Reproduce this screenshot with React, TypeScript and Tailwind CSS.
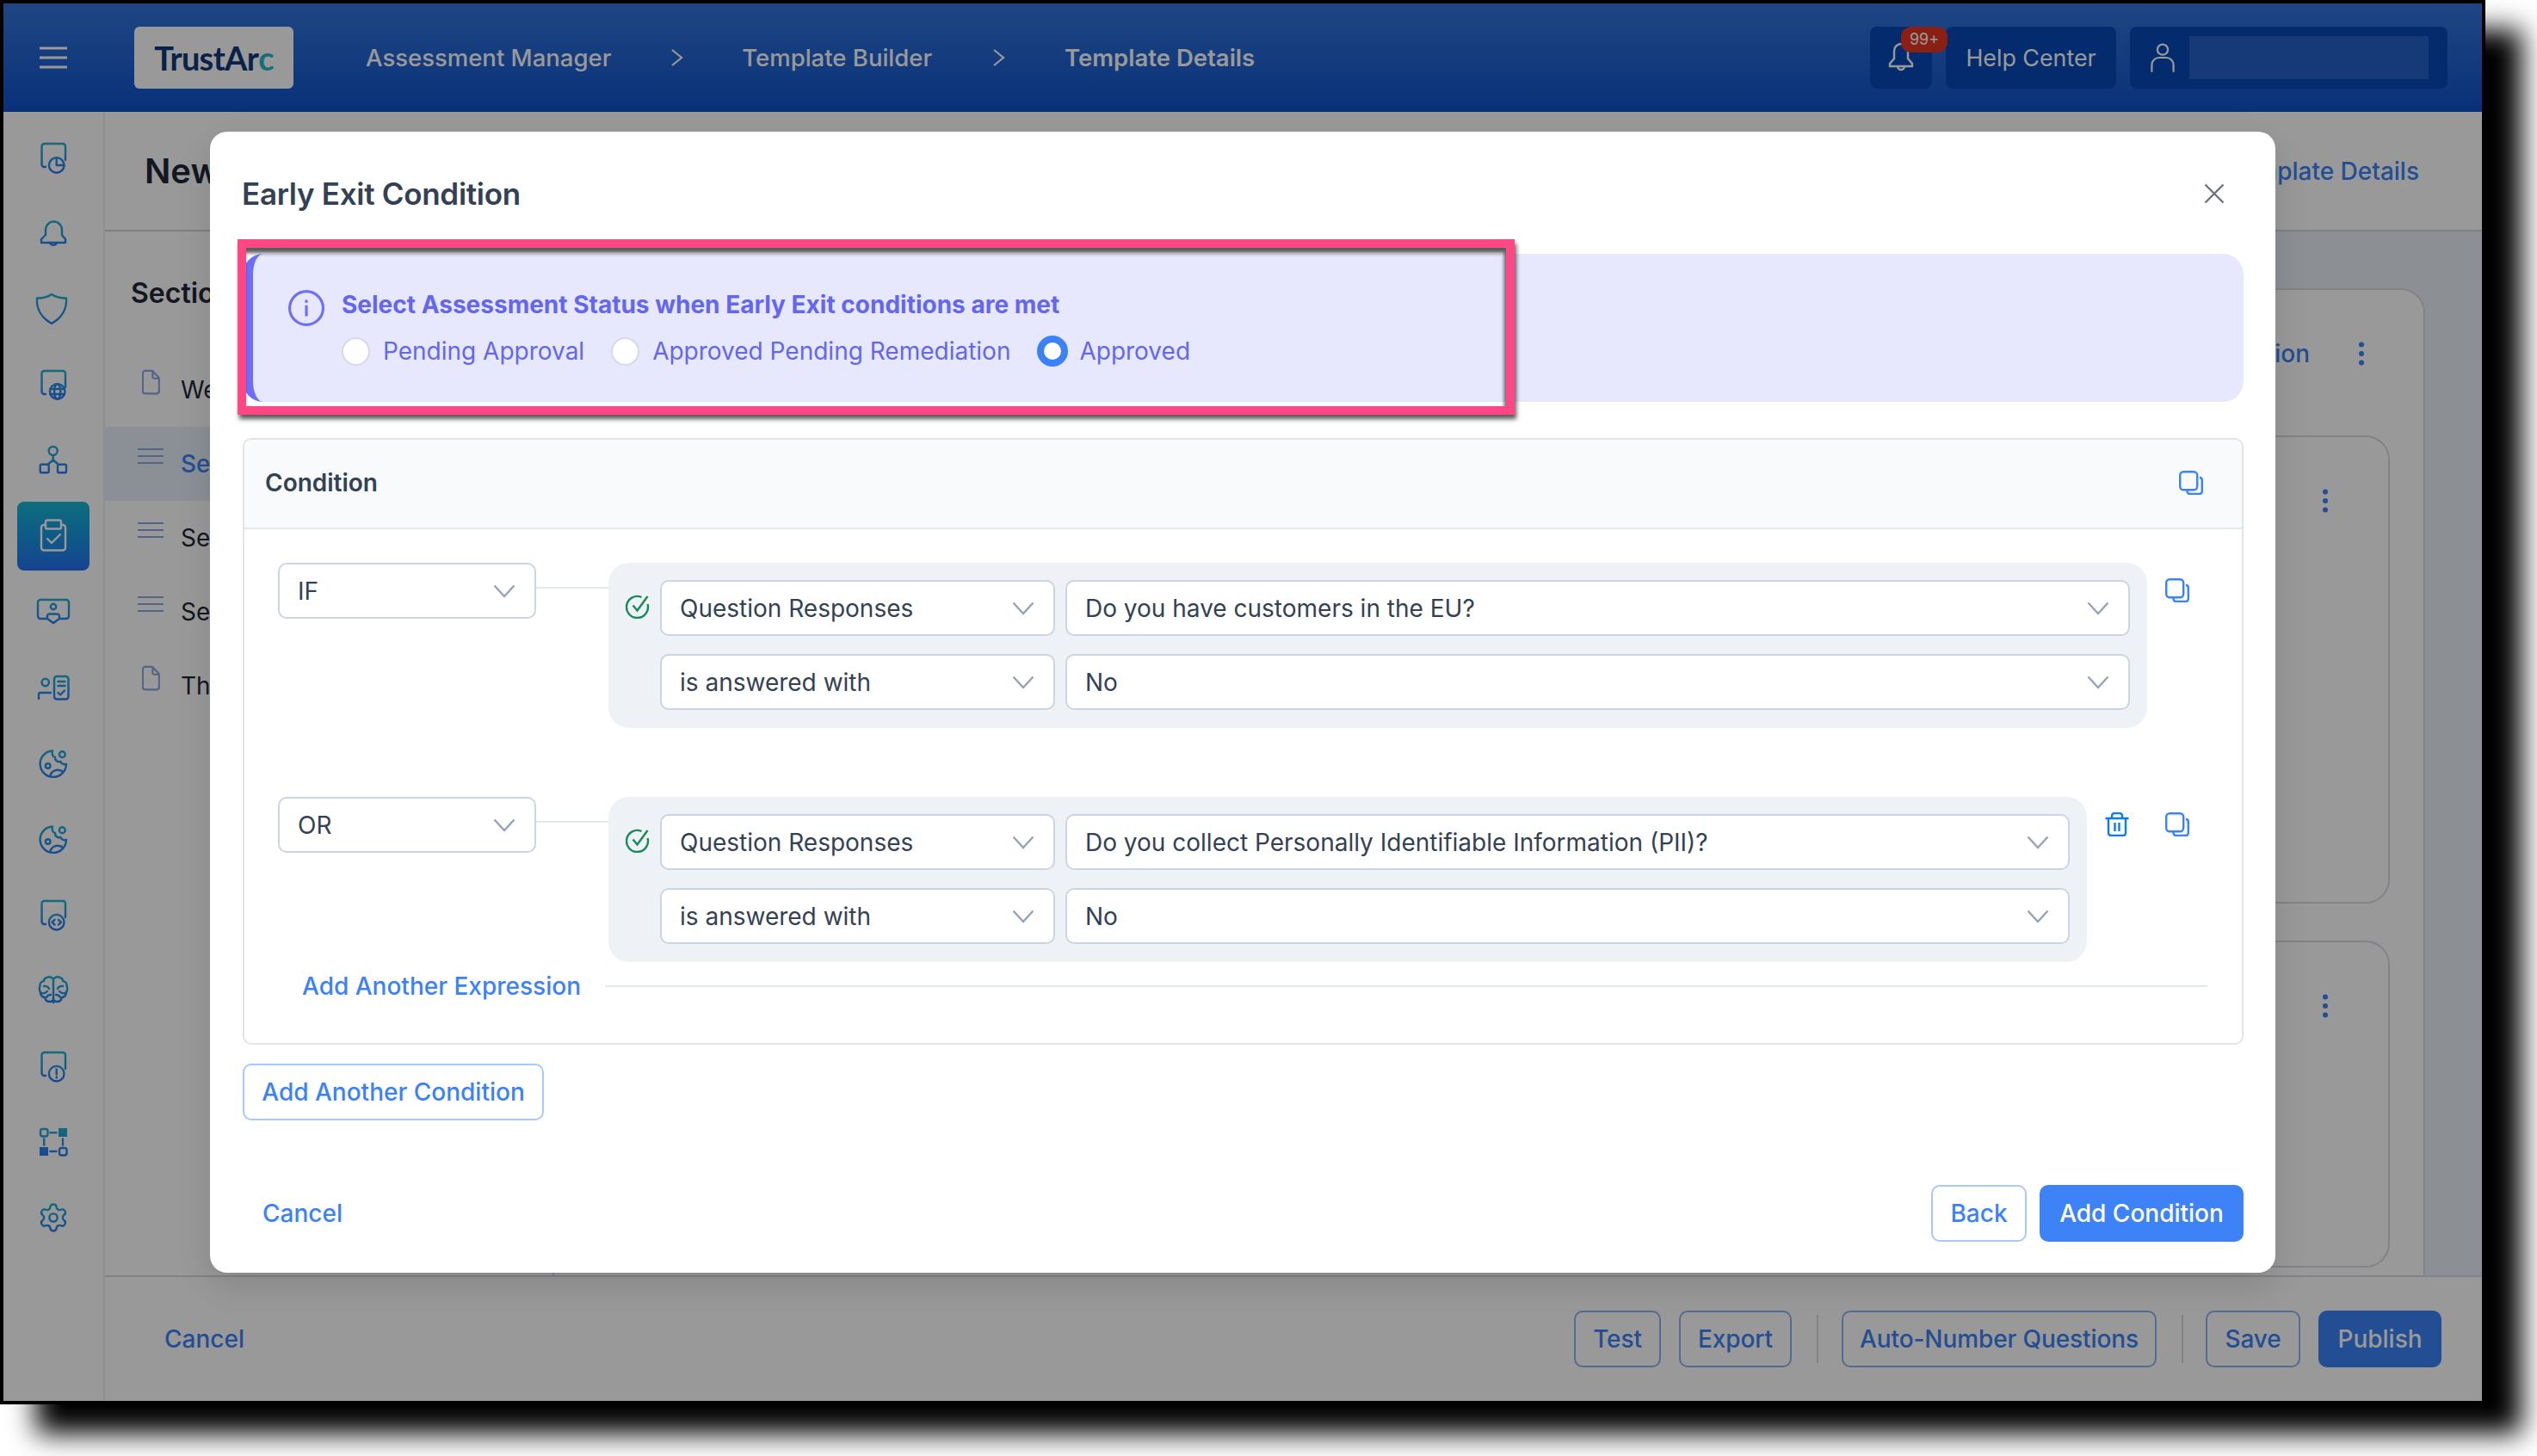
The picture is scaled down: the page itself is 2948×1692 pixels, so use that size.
import type { ReactNode } from "react";

const SIDE_ICONS: ReactNode[] = [
  <DocBase key="a">
    <circle cx="27.7" cy="33" r="8.8" />
    <path d="M27.7 33V24.2M27.7 33h8.8" />
  </DocBase>,
  <g key="b">
    <path d="M15 22v-6a9.5 9.5 0 0 1 19 0v6l4 5v4H10v-4z" transform="translate(0 4)" />
    <path d="M20 35a4.2 4.2 0 0 0 8 0" />
  </g>,
  <path key="c" d="M22 7c4 3 10 4.5 17 4.5 1 14-7 24-17 29.5-10-5.5-18-15.5-17-29.5 7 0 13-1.500 17-4.500z" />,
  <DocBase key="d">
    <circle cx="28.700" cy="32" r="8.800" />
    <ellipse cx="28.700" cy="32" rx="3.600" ry="8.800" />
    <path d="M20.500 29h16.400M20.500 35h16.400" />
  </DocBase>,
  <g key="e">
    <circle cx="23.700" cy="13" r="5" />
    <rect x="8.700" y="28.700" width="10" height="9.500" rx="1.500" />
    <rect x="29" y="28.700" width="10" height="9.500" rx="1.500" />
    <path d="M23.700 18v5.500M23.700 23.500l-6 5.200M23.700 23.500l6 5.200" />
  </g>,
  <g key="f">
    <path d="M15 11h-2a3 3 0 0 0-3 3v23.500a3 3 0 0 0 3 3h22a3 3 0 0 0 3-3V14a3 3 0 0 0-3-3h-2" />
    <rect x="15" y="5.500" width="18" height="10" rx="2" />
    <path d="M17 27l5 5 10-10" />
  </g>,
  <g key="g">
    <path d="M16 32H9a3 3 0 0 1-3-3V13a3 3 0 0 1 3-3h30a3 3 0 0 1 3 3v16a3 3 0 0 1-3 3h-7" />
    <circle cx="24" cy="18" r="3.200" />
    <path d="M17 32v-3a2.500 2.500 0 0 1 2.500-2.500h9A2.500 2.500 0 0 1 31 29v3l-7 5z" />
  </g>,
  <g key="h">
    <rect x="25" y="11" width="16.500" height="26.500" rx="3" />
    <path d="M29.500 17h8M29.500 22h8M29.500 30l2.500 2.500 5-5" />
    <circle cx="14.700" cy="18" r="4.200" />
    <path d="M7 37v-5a2 2 0 0 1 2-2h12" />
  </g>,
  <Cookie key="i" />,
  <Cookie key="j" />,
  <DocBase key="k">
    <circle cx="27.700" cy="32.700" r="8.800" />
    <path d="M25.500 29.800l-3 2.900 3 2.900M30 29.800l3 2.900-3 2.900" />
  </DocBase>,
  <g key="l">
    <path d="M24 38V11" />
    <path d="M24 11c-1.500-2.500-5-3.500-7.500-2-2 .5-3.500 2-3.500 4-3 .5-5 3-4.500 6-1 1-1 5 .5 7-.5 3 2 6 5 6 .5 3 3 5 6 5 2 0 4-1 4-3" />
    <path d="M13 19c3-.5 5 1 6 3M10 27c3 1 5 0 7-2M16 32c1-2 3-3 5-3" />
    <g transform="matrix(-1 0 0 1 48 0)">
      <path d="M24 11c-1.500-2.500-5-3.500-7.500-2-2 .5-3.500 2-3.500 4-3 .5-5 3-4.500 6-1 1-1 5 .5 7-.5 3 2 6 5 6 .5 3 3 5 6 5 2 0 4-1 4-3" />
      <path d="M13 19c3-.5 5 1 6 3M10 27c3 1 5 0 7-2M16 32c1-2 3-3 5-3" />
    </g>
  </g>,
  <DocBase key="m">
    <circle cx="27.700" cy="32.700" r="8.800" />
    <path d="M27.700 27.500v6M27.700 36.500v1" />
  </DocBase>,
  <g key="n">
    <rect x="9" y="9" width="8.500" height="8.500" rx="2.500" />
    <rect x="31" y="31" width="8.500" height="8.500" rx="2.500" />
    <rect x="30" y="8" width="10" height="10" fill="url(#side-grad)" stroke="none" />
    <rect x="8" y="30" width="10" height="10" fill="url(#side-grad)" stroke="none" />
    <path d="M20.500 13.200h7M20.500 35h7M13.200 20.500v7M35 20.500v7" strokeDasharray="2.500 2" />
  </g>,
  <g key="o" transform="translate(5.400 5.400) scale(1.550)" strokeWidth="1.550">
    <path
      stroke="url(#gear-grad)"
      d="M9.671 4.136a2.34 2.34 0 0 1 4.659 0 2.34 2.34 0 0 0 3.319 1.915 2.34 2.34 0 0 1 2.33 4.033 2.34 2.34 0 0 0 0 3.831 2.34 2.34 0 0 1-2.33 4.033 2.34 2.34 0 0 0-3.319 1.915 2.34 2.34 0 0 1-4.659 0 2.34 2.34 0 0 0-3.32-1.915 2.34 2.34 0 0 1-2.33-4.033 2.34 2.34 0 0 0 0-3.831A2.34 2.34 0 0 1 6.350 6.051a2.34 2.34 0 0 0 3.319-1.915"
    />
    <circle stroke="url(#gear-grad)" cx="12" cy="12" r="3" />
  </g>,
];

function DocBase({ children }: { children: ReactNode }) {
  return (
    <g>
      <path d="M15 35h-1.500a3 3 0 0 1-3-3V11a3 3 0 0 1 3-3h21.500a3 3 0 0 1 3 3v16" />
      {children}
    </g>
  );
}

function Cookie() {
  return (
    <g>
      <path d="M23 9.500A15.200 15.200 0 1 0 39 25c-3 1-6-1-6.500-3-4 1-7-2-6.500-5-3-.5-4-4-3-7.500z" />
      <circle cx="34.300" cy="13.700" r="3.400" />
      <circle cx="17.700" cy="27" r="2.800" />
      <path d="M20 39c1-5 6-8 10.500-7 2 0 3.500 1 4.500 2" />
    </g>
  );
}

function Chevron() {
  return (
    <svg viewBox="0 0 26 16" className="h-[16px] w-[26px] shrink-0" fill="none" stroke="#94a3b8" strokeWidth="2.400">
      <path d="M1.500 1.500L13 14 24.500 1.500" />
    </svg>
  );
}

function CopyIcon() {
  return (
    <svg viewBox="0 0 28 28" className="h-[28px] w-[28px] shrink-0" fill="none" stroke="#3b82f6" strokeWidth="2.400">
      <rect x="1.200" y="1.200" width="20" height="21" rx="4" />
      <path d="M24 8a3 3 0 0 1 2.800 3v13a3 3 0 0 1-3 3H12.500a3 3 0 0 1-3-3v-1.800" />
    </svg>
  );
}

function TrashIcon() {
  return (
    <svg viewBox="0 0 28 28" className="h-[28px] w-[28px] shrink-0" fill="none" stroke="#0b7bf5" strokeWidth="2.400">
      <path d="M0.500 7H27.500M8 7V4a3 3 0 0 1 3-3h6a3 3 0 0 1 3 3v3M4 7v17a3 3 0 0 0 3 3h14a3 3 0 0 0 3-3V7M11.500 12v10M16.500 12v10" />
    </svg>
  );
}

function CheckIcon() {
  return (
    <svg viewBox="0 0 28 28" className="mt-[17px] h-[28px] w-[28px] shrink-0" fill="none" stroke="#188a55" strokeWidth="2.400">
      <path d="M25.500 11a12.500 12.500 0 1 1-7-8" />
      <path d="M8.500 12.500l5 6L25.500 2" />
    </svg>
  );
}

function FileIcon() {
  return (
    <svg viewBox="0 0 22 30" className="ml-[5px] mr-[4px] mt-[-18px] h-[30px] w-[21px] shrink-0" fill="none" stroke="#8ba7e0" strokeWidth="2.200">
      <path d="M3.500 1.200h9L20.800 10v16a3 3 0 0 1-3 3H4a3 3 0 0 1-3-3V4a3 3 0 0 1 2.500-2.800zM13 1.500V9a1.500 1.500 0 0 0 1.500 1.500h6" />
    </svg>
  );
}

function LinesIcon() {
  return (
    <svg viewBox="0 0 30 20" className="mt-[-18px] h-[20px] w-[30px] shrink-0" fill="none" stroke="#8ba7e0" strokeWidth="2">
      <path d="M0 2h30M0 10h30M0 18h30" />
    </svg>
  );
}

function Kebab({ className }: { className?: string }) {
  return (
    <svg viewBox="0 0 8 28" className={`h-[28px] w-[8px] ${className ?? ""}`} fill="#3b82f6">
      <circle cx="4" cy="3.500" r="3" />
      <circle cx="4" cy="14" r="3" />
      <circle cx="4" cy="24.500" r="3" />
    </svg>
  );
}

function SelectBox({ label, className }: { label: string; className?: string }) {
  return (
    <div className={`flex h-[65px] items-center justify-between rounded-[10px] border-2 border-[#cbd5e1] bg-white pl-[21px] pr-[22px] text-[#334155] ${className ?? ""}`}>
      <span>{label}</span>
      <Chevron />
    </div>
  );
}

function ExpressionRow({ op, question, boxWidth, showTrash }: { op: string; question: string; boxWidth: string; showTrash?: boolean }) {
  return (
    <div className="flex items-start">
      <SelectBox label={op} className="w-[300px] shrink-0" />
      <div className="mt-[28px] h-[2px] w-[84px] shrink-0 bg-[#e2e8f0]" />
      <div className={`flex rounded-[24px] bg-[#eef1f6] pb-[21px] pl-[20px] pr-[20px] pt-[20px] ${boxWidth}`}>
        <CheckIcon />
        <div className="ml-[12px] grid flex-1 grid-cols-[459px_1fr] gap-x-[12px] gap-y-[21px]">
          <SelectBox label="Question Responses" />
          <SelectBox label={question} />
          <SelectBox label="is answered with" />
          <SelectBox label="No" />
        </div>
      </div>
      <div className="ml-[21px] mt-[18px] flex gap-[42px]">
        {showTrash && <TrashIcon />}
        <CopyIcon />
      </div>
    </div>
  );
}

function Radio({ label, checked }: { label: string; checked?: boolean }) {
  return (
    <div className="flex items-center gap-[15px]">
      {checked ? (
        <span className="mr-[-2px] h-[36px] w-[36px] rounded-full border-[8px] border-[#3b82f6] bg-white" />
      ) : (
        <span className="h-[33px] w-[33px] rounded-full border-2 border-[#d5dbe6] bg-white" />
      )}
      <span>{label}</span>
    </div>
  );
}

function FooterButton({ label, width }: { label: string; width: string }) {
  return (
    <button className={`flex h-[66px] items-center justify-center rounded-[10px] border-2 border-[#8fb3f0] font-medium tracking-[-0.1px] text-[#3b82f6] ${width}`}>{label}</button>
  );
}

export default function App() {
  return (
    <div className="relative h-[1692px] w-[2948px] overflow-hidden bg-white text-[28px] leading-[32px] [font-family:Inter,sans-serif]">
      <div className="relative flex h-[1632px] w-[2888px] flex-col overflow-hidden border-4 border-black shadow-[42px_34px_30px_#000]">
        {/* top bar */}
        <header className="flex h-[126px] shrink-0 items-center bg-linear-to-b from-[#3475d9] to-[#0d52cb] pr-[40px] text-white">
          <svg viewBox="0 0 32 26" className="ml-[42px] h-[26px] w-[32px]" fill="none" stroke="#fff" strokeWidth="3">
            <path d="M0 2h32M0 13h32M0 24h32" />
          </svg>
          <div className="ml-[78px] flex h-[72px] w-[185px] items-center justify-center rounded-[6px] bg-white text-[38px] font-bold tracking-[-0.7px] text-[#12397a] [font-family:Lato,sans-serif]">
            TrustAr<span className="text-[#27b6c9]">c</span>
          </div>
          <span className="ml-[84px] text-[27.5px] font-medium">Assessment Manager</span>
          <svg viewBox="0 0 14 20" className="ml-[70px] h-[20px] w-[14px]" fill="none" stroke="#fff" strokeWidth="2.200">
            <path d="M1 1l11 9-11 9" />
          </svg>
          <span className="ml-[68px] text-[27.5px] font-medium">Template Builder</span>
          <svg viewBox="0 0 14 20" className="ml-[71px] h-[20px] w-[14px]" fill="none" stroke="#fff" strokeWidth="2.200">
            <path d="M1 1l11 9-11 9" />
          </svg>
          <span className="ml-[69px] text-[27.5px] font-semibold">Template Details</span>
          <div className="ml-auto flex gap-[16px]">
            <div className="relative flex h-[72px] w-[72px] items-center justify-center rounded-[8px] bg-[#0749b7]">
              <svg viewBox="0 0 30 36" className="h-[36px] w-[30px]" fill="none" stroke="#fff" strokeWidth="2.400">
                <path d="M7 19v-9a8 8 0 0 1 16 0v9l5 6v3H2v-3zM11 28a4 4 0 0 0 8 0" />
              </svg>
              <span className="absolute left-[36px] top-0 flex h-[30px] w-[54px] items-center justify-center rounded-[12px] bg-[#e63620] text-[18px] leading-none">99+</span>
            </div>
            <div className="flex h-[72px] w-[198px] items-center justify-center rounded-[8px] bg-[#0749b7] text-[26.800px]">Help Center</div>
            <div className="flex h-[72px] w-[369px] items-center rounded-[8px] bg-[#0749b7] pl-[24px]">
              <svg viewBox="0 0 30 36" className="h-[36px] w-[28px]" fill="none" stroke="#fff" strokeWidth="2.400">
                <circle cx="15" cy="8" r="6.500" />
                <path d="M1.500 36v-9a9 9 0 0 1 9-9h9a9 9 0 0 1 9 9v9" />
              </svg>
              <div className="ml-[17px] h-[50px] w-[278px] bg-[#2561c8]" />
            </div>
          </div>
        </header>

        <div className="flex min-h-0 flex-1">
          {/* left rail */}
          <aside className="flex w-[118px] shrink-0 flex-col items-center gap-[8px] border-r-2 border-[#eceef2] bg-white pt-[13px]">
            <svg width="0" height="0" className="absolute">
              <defs>
                <linearGradient id="side-grad" gradientUnits="userSpaceOnUse" x1="0" y1="6" x2="0" y2="41">
                  <stop offset="0" stopColor="#1eb4d0" />
                  <stop offset="1" stopColor="#2b78f0" />
                </linearGradient>
                <linearGradient id="gear-grad" gradientUnits="userSpaceOnUse" x1="0" y1="2" x2="0" y2="22">
                  <stop offset="0" stopColor="#1eb4d0" />
                  <stop offset="1" stopColor="#2b78f0" />
                </linearGradient>
              </defs>
            </svg>
            {SIDE_ICONS.map((icon, i) => (
              <div
                key={i}
                className={`flex h-[80px] w-[84px] items-center justify-center rounded-[8px] ${i === 5 ? "bg-linear-to-b from-[#1ab8d0] to-[#266ff0]" : ""}`}
              >
                <svg
                  viewBox="0 0 48 48"
                  className="h-[48px] w-[48px]"
                  fill="none"
                  stroke={i === 5 ? "#fff" : "url(#side-grad)"}
                  strokeWidth="2.400"
                  strokeLinecap="round"
                  strokeLinejoin="round"
                >
                  {icon}
                </svg>
              </div>
            ))}
          </aside>

          <div className="flex min-w-0 flex-1 flex-col">
            <div className="flex h-[139px] shrink-0 items-center justify-between border-b-2 border-[#cfd4dc] bg-white pl-[46px] pr-[73px]">
              <h1 className="text-[40px] font-semibold leading-[48px] text-[#1f2937]">New</h1>
              <span className="font-medium text-[#3b82f6]">Edit Template Details</span>
            </div>

            <div className="flex min-h-0 flex-1">
              {/* sections list */}
              <div className="w-[520px] shrink-0 bg-white pt-[54px]">
                <h2 className="pl-[30px] text-[32px] font-semibold leading-[36px] text-[#1f2937]">Sections</h2>
                <div className="mt-[51px] text-[#1f2937]">
                  <div className="flex h-[86px] items-center gap-[20px] pl-[38px]">
                    <FileIcon />
                    <span>Welcome</span>
                  </div>
                  <div className="flex h-[86px] items-center gap-[20px] bg-[#e8f0fb] pl-[38px] font-medium text-[#3b82f6]">
                    <LinesIcon />
                    <span>Section 1</span>
                  </div>
                  <div className="flex h-[86px] items-center gap-[20px] pl-[38px]">
                    <LinesIcon />
                    <span>Section 2</span>
                  </div>
                  <div className="flex h-[86px] items-center gap-[20px] pl-[38px]">
                    <LinesIcon />
                    <span>Section 3</span>
                  </div>
                  <div className="flex h-[86px] items-center gap-[20px] pl-[38px]">
                    <FileIcon />
                    <span>Thank You</span>
                  </div>
                </div>
              </div>

              {/* section body, mostly behind the dialog */}
              <div className="min-w-0 flex-1 bg-[#e9eef7] pr-[66px] pt-[66px]">
                <div className="h-full rounded-t-[28px] border-2 border-b-0 border-[#d5dae3] bg-white pr-[39px]">
                  <div className="flex h-[169px] items-center justify-end pb-[22px] pr-[29px] text-[#3b82f6]">
                    <span className="font-medium">Add Question</span>
                    <Kebab className="ml-[56px]" />
                  </div>
                  <div className="flex h-[544px] justify-end rounded-[28px] border-2 border-[#d5dae3] pr-[69px] pt-[60px]">
                    <Kebab />
                  </div>
                  <div className="mt-[43px] flex h-[380px] justify-end rounded-[28px] border-2 border-[#d5dae3] pr-[69px] pt-[60px]">
                    <Kebab />
                  </div>
                </div>
              </div>
            </div>

            <div className="flex h-[146px] shrink-0 items-center border-t-2 border-[#d5dae3] bg-white pl-[69px] pr-[47px]">
              <span className="font-medium text-[#3b82f6]">Cancel</span>
              <div className="ml-auto flex items-center">
                <FooterButton label="Test" width="w-[101px]" />
                <FooterButton label="Export" width="ml-[21px] w-[131px]" />
                <div className="ml-[29px] h-[56px] w-[2px] bg-[#d5dae3]" />
                <FooterButton label="Auto-Number Questions" width="ml-[27px] w-[366px]" />
                <div className="ml-[29px] h-[56px] w-[2px] bg-[#d5dae3]" />
                <FooterButton label="Save" width="ml-[26px] w-[110px]" />
                <button className="ml-[21px] flex h-[66px] w-[143px] items-center justify-center rounded-[10px] bg-[#3b82f6] font-medium text-white">Publish</button>
              </div>
            </div>
          </div>
        </div>

        {/* dim layer */}
        <div className="absolute inset-0 bg-black/40" />

        {/* dialog */}
        <div className="absolute left-[240px] top-[149px] flex h-[1326px] w-[2400px] flex-col rounded-[20px] bg-white pl-[38px] pr-[37px] shadow-[0_16px_40px_rgba(0,0,0,0.12)]">
          <div className="flex h-[142px] shrink-0 items-center justify-between pr-[22px] pt-[1px]">
            <h2 className="ml-[-1px] text-[35px] font-semibold leading-[44px] tracking-[-0.3px] text-[#334155]">Early Exit Condition</h2>
            <svg viewBox="0 0 24 24" className="h-[24px] w-[24px]" fill="none" stroke="#6b7280" strokeWidth="2.400">
              <path d="M1.500 1.500l21 21M22.500 1.500l-21 21" />
            </svg>
          </div>

          <div className="flex h-[172px] shrink-0 items-start rounded-[24px] border-l-[12px] border-[#6c6ffb] bg-[#e7e8fd] pl-[41px] pt-[42px] text-[#6366f1]">
            <svg viewBox="0 0 40 40" className="h-[42px] w-[42px] shrink-0" fill="none" stroke="#6c6ffb" strokeWidth="3">
              <circle cx="20" cy="20" r="18.500" />
              <path d="M20 17v12M20 11v3" />
            </svg>
            <div className="ml-[20px]">
              <p className="pt-[1px] font-bold">Select Assessment Status when Early Exit conditions are met</p>
              <div className="mt-[20px] flex items-center gap-[31px]">
                <Radio label="Pending Approval" />
                <Radio label="Approved Pending Remediation" />
                <Radio label="Approved" checked />
              </div>
            </div>
          </div>

          <div className="mt-[42px] h-[705px] shrink-0 rounded-[10px] border-2 border-[#e2e4e8]">
            <div className="flex h-[104px] items-center justify-between rounded-t-[8px] border-b-2 border-[#e2e8f0] bg-[#f8fafc] pb-[2px] pl-[24px] pr-[45px]">
              <span className="font-semibold text-[#334155]">Condition</span>
              <CopyIcon />
            </div>
            <div className="pl-[39px] pr-[40px] pt-[39px]">
              <ExpressionRow op="IF" question="Do you have customers in the EU?" boxWidth="w-[1788px]" />
              <div className="mt-[80px]">
                <ExpressionRow op="OR" question="Do you collect Personally Identifiable Information (PII)?" boxWidth="w-[1718px]" showTrash />
              </div>
              <div className="mt-[12px] flex items-center pl-[28px]">
                <span className="font-medium text-[#3b82f6]">Add Another Expression</span>
                <div className="ml-[28px] h-[2px] flex-1 bg-[#e2e8f0]" />
              </div>
            </div>
          </div>

          <button className="mt-[22px] flex h-[66px] w-[350px] shrink-0 items-center justify-center rounded-[10px] border-2 border-[#a8c8fb] font-medium text-[#3b82f6]">
            Add Another Condition
          </button>

          <div className="mt-[75px] flex items-center justify-between pl-[23px]">
            <span className="font-medium text-[#3b82f6]">Cancel</span>
            <div className="flex gap-[15px]">
              <button className="h-[66px] w-[111px] rounded-[10px] border-2 border-[#a8c8fb] font-medium text-[#3b82f6]">Back</button>
              <button className="h-[66px] w-[237px] rounded-[10px] bg-[#3e82f7] font-medium text-white">Add Condition</button>
            </div>
          </div>
        </div>

        {/* annotation box drawn over the notice */}
        <div className="absolute left-[272px] top-[274px] h-[204px] w-[1484px] border-[10px] border-[#ff4785] shadow-[2px_5px_5px_rgba(0,0,0,0.65),inset_-2px_6px_4px_rgba(0,0,0,0.65)]" />
      </div>
    </div>
  );
}
